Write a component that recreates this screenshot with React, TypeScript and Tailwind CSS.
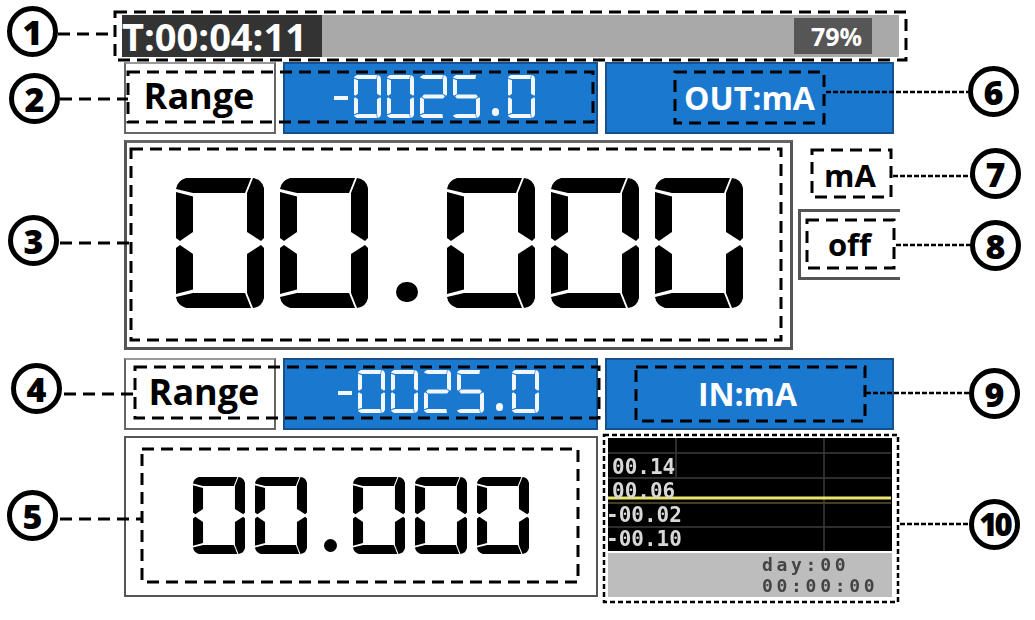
import React from 'react';

const segmentPaths = (t: number, tv: number) => {
  const inner = 65 - t * 0.65;
  return {
    a: `M0 ${tv - 4} Q1 3 10 0 L75 0 L${86 - t} ${tv} L${t} ${tv} Z`,
    f: `M0 ${tv - 1} L${t} ${tv + 3.5} V${inner} L4 63 L0 60 Z`,
    b: `M77 0 Q86 1 88 10 V60 L85 63 L${88 - t} ${inner} V${tv} Z`,
    g: `M7 65 L${t} ${65 - tv / 2} H${88 - t} L81 65 L${88 - t} ${65 + tv / 2} H${t} Z`,
  };
};

const digitMap: Record<string, string> = {
  '0': 'abcdef',
  '2': 'abged',
  '5': 'afgcd',
};

function Digit({ char, thin, className }: { char: string; thin?: boolean; className: string }) {
  const on = digitMap[char] ?? '';
  const p = thin ? segmentPaths(13, 12) : segmentPaths(17, 15);
  return (
    <svg viewBox="0 0 88 130" preserveAspectRatio="none" className={className} fill="currentColor" aria-hidden>
      {on.includes('a') && <path d={p.a} />}
      {on.includes('b') && <path d={p.b} />}
      {on.includes('f') && <path d={p.f} />}
      {on.includes('g') && <path d={p.g} />}
      <g transform="matrix(1 0 0 -1 0 130)">
        {on.includes('d') && <path d={p.a} />}
        {on.includes('c') && <path d={p.b} />}
        {on.includes('e') && <path d={p.f} />}
      </g>
    </svg>
  );
}

const lcdSizes = {
  big: {
    row: 'gap-[16px] text-black',
    text: 'text-[120px]',
    digit: 'h-[130px] w-[88px] shrink-0',
    dot: 'mt-[104px] ml-[12px] mr-[13px] h-[20px] w-[22px]',
    thin: false,
  },
  mid: {
    row: 'gap-[10px] text-black',
    text: 'text-[70px]',
    digit: 'h-[77px] w-[52px] shrink-0',
    dot: 'mt-[62px] ml-[7px] mr-[6px] h-[13px] w-[13px]',
    thin: false,
  },
  small: {
    row: 'gap-[6px] text-[#f2f7fd]',
    text: 'text-[40px]',
    digit: 'h-[43px] w-[27px] shrink-0',
    dot: 'mt-[33px] ml-[6px] mr-[3px] h-[8px] w-[7px]',
    thin: true,
  },
};

function Lcd({ value, size }: { value: string; size: keyof typeof lcdSizes }) {
  const s = lcdSizes[size];
  return (
    <div className={`relative flex w-fit items-start ${s.row}`}>
      <span className={`absolute left-0 top-0 leading-none whitespace-nowrap text-transparent ${s.text}`}>{value}</span>
      {value.split('').map((c, i) => {
        if (c === '.') return <div key={i} className={`shrink-0 rounded-full bg-current ${s.dot}`} />;
        if (c === '-') return <div key={i} className="mt-[21px] h-[4px] w-[14px] shrink-0 bg-current" />;
        return <Digit key={i} char={c} thin={s.thin} className={s.digit} />;
      })}
    </div>
  );
}

function RangeRow({ label, pad, rangeClass, labelClass }: { label: string; pad: string; rangeClass: string; labelClass: string }) {
  return (
    <div className="flex h-[72px] gap-[7px]">
      <div className={`flex w-[152px] items-center justify-center border-2 border-[#666] border-t-[#999] pb-[4px] text-[36px] leading-none font-bold text-black ${rangeClass}`}>
        Range
      </div>
      <div className={`w-[315px] border-2 border-[#17508c] bg-[#1b78cf] ${pad}`}>
        <Lcd value="-0025.0" size="small" />
      </div>
      <div className={`flex w-[289px] items-center justify-center border-2 border-[#17508c] bg-[#1b78cf] text-[32px] leading-none font-bold text-white ${labelClass}`}>
        {label}
      </div>
    </div>
  );
}

function Chart() {
  return (
    <div className="flex h-[161px] w-[289px] flex-col pl-[3px] pt-[2px] pr-[2px]">
      <div className="relative h-[113px] bg-black">
        <svg className="absolute inset-0 h-full w-full" aria-hidden>
          <g stroke="#3c3c3c" strokeWidth="1.5">
            <line x1="0" x2="283" y1="15" y2="15" />
            <line x1="0" x2="283" y1="40" y2="40" />
            <line x1="0" x2="283" y1="65" y2="65" />
            <line x1="0" x2="283" y1="89" y2="89" />
            <line x1="68" x2="68" y1="0" y2="40" />
            <line x1="216" x2="216" y1="0" y2="113" />
          </g>
          <line x1="0" x2="283" y1="60" y2="60" stroke="#ece56c" strokeWidth="3" />
          <line x1="0" x2="283" y1="65" y2="65" stroke="#4a4720" strokeWidth="1.5" />
        </svg>
        <div className="absolute bottom-0 left-0 flex flex-col text-[21px] leading-[24px] font-bold text-[#d8d8d8] font-['DejaVu_Sans_Mono',monospace] blur-[0.6px]">
          <div className="pl-[4px]">00.14</div>
          <div className="pl-[4px]">00.06</div>
          <div className="-ml-[2px]">-00.02</div>
          <div className="-ml-[2px]">-00.10</div>
        </div>
      </div>
      <div className="mt-[2px] flex flex-1 flex-col justify-center bg-[#bdbdbd] pl-[154px] text-[18px] leading-[21px] font-bold tracking-[3.7px] text-[#444] font-['DejaVu_Sans_Mono',monospace] blur-[0.6px]">
        <div>day:00</div>
        <div>00:00:00</div>
      </div>
    </div>
  );
}

const dashedBoxes = [
  [128, 72, 465, 50],
  [131, 149, 650, 191],
  [135, 367, 464, 51],
  [142, 449, 436, 133],
  [675, 72, 149, 51],
  [812, 150, 79, 47],
  [807, 220, 87, 48],
  [636, 367, 229, 54],
];

const leaders = [
  [58, 34, 116],
  [60, 99, 128],
  [60, 243, 131],
  [64, 394, 135],
  [60, 519, 142],
];

const thinLeaders = [
  [826, 92, 968],
  [893, 176, 971],
  [896, 245, 971],
  [866, 393, 970],
  [900, 524, 970],
];

const callouts = [
  { n: '1', pos: 'left-[7px] top-[6px]' },
  { n: '2', pos: 'left-[9px] top-[73px]' },
  { n: '3', pos: 'left-[8px] top-[215px]' },
  { n: '4', pos: 'left-[11px] top-[363px]' },
  { n: '5', pos: 'left-[7px] top-[490px]' },
  { n: '6', pos: 'left-[968px] top-[66px]' },
  { n: '7', pos: 'left-[970px] top-[148px]' },
  { n: '8', pos: 'left-[970px] top-[220px]' },
  { n: '9', pos: 'left-[969px] top-[368px]' },
  { n: '10', pos: 'left-[969px] top-[499px]' },
];

export default function App() {
  return (
    <div className="relative h-[620px] w-[1035px] overflow-hidden bg-white font-['Open_Sans',sans-serif]">
      <div className="flex w-[900px] flex-col pl-[124px] pt-[15px]">
        <div className="-ml-[2px] flex h-[42px] w-[777px] items-center justify-between bg-[#a9a9a9] pr-[27px]">
          <div className="flex h-full w-[200px] items-center bg-[#333] text-[38px] leading-none font-bold text-white">
            T:00:04:11
          </div>
          <div className="flex h-[36px] w-[78px] items-center justify-center bg-[#565656] pl-[7px] text-[25px] leading-none font-bold text-white">
            79%
          </div>
        </div>

        <div className="mt-[5px]">
          <RangeRow label="OUT:mA" pad="pl-[49px] pt-[11px]" rangeClass="pr-[2px]" labelClass="" />
        </div>

        <div className="mt-[6px] flex h-[210px] w-[776px]">
          <div className="h-full w-[670px] border-[3px] border-[#555] border-t-[#666] pl-[49px] pt-[35px]">
            <Lcd value="00.000" size="big" />
          </div>
          <div className="flex flex-1 flex-col pl-[5px]">
            <div className="flex h-[69px] items-center justify-center pl-[4px] pr-[2px] pt-[1px] text-[31px] leading-none font-bold text-black">
              mA
            </div>
            <div className="flex h-[71px] w-[102px] items-center justify-center border-y-[3px] border-l-[3px] border-[#555] pr-[2px] text-[31px] leading-none font-bold text-black">
              off
            </div>
          </div>
        </div>

        <div className="mt-[8px]">
          <RangeRow label="IN:mA" pad="pl-[53px] pt-[10px]" rangeClass="pl-[8px]" labelClass="pr-[4px]" />
        </div>

        <div className="mt-[6px] flex gap-[7px]">
          <div className="h-[161px] w-[474px] border-2 border-[#555] pl-[67px] pt-[39px]">
            <Lcd value="00.000" size="mid" />
          </div>
          <Chart />
        </div>
      </div>

      <svg className="pointer-events-none absolute inset-0 h-full w-full" fill="none" aria-hidden>
        <rect x="115" y="12" width="791" height="48" stroke="#fff" strokeWidth="3" />
        <rect x="115" y="12" width="791" height="48" stroke="#000" strokeWidth="3" strokeDasharray="12 7" />
        <rect x="604" y="435" width="294" height="167" stroke="#fff" strokeWidth="2.5" />
        <rect x="604" y="435" width="294" height="167" stroke="#000" strokeWidth="2.5" strokeDasharray="5 3" />
        {dashedBoxes.map(([x, y, w, h], i) => (
          <rect key={i} x={x} y={y} width={w} height={h} stroke="#000" strokeWidth="3" strokeDasharray="12 7" />
        ))}
        {leaders.map(([x1, y, x2], i) => (
          <line key={i} x1={x1} x2={x2} y1={y} y2={y} stroke="#000" strokeWidth="3" strokeDasharray="12 7" />
        ))}
        {thinLeaders.map(([x1, y, x2], i) => (
          <line key={i} x1={x1} x2={x2} y1={y} y2={y} stroke="#000" strokeWidth="2.5" strokeDasharray="5 2" />
        ))}
      </svg>

      {callouts.map((c) => (
        <div
          key={c.n}
          className={`absolute flex h-[51px] w-[51px] items-center justify-center rounded-full border-[5px] border-black bg-white leading-none font-extrabold text-black ${c.pos} ${c.n === '10' ? 'text-[31px] tracking-[-3px]' : 'text-[34px]'}`}
        >
          {c.n}
        </div>
      ))}
    </div>
  );
}
